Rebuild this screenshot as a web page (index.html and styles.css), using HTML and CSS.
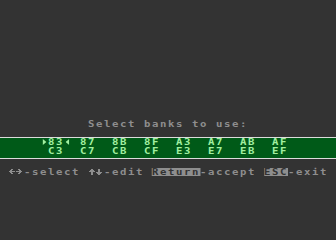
FILE: index.html
```
<!DOCTYPE html>
<html>
<head>
<meta charset="utf-8">
<link rel="stylesheet" href="styles.css">
</head>
<body>
<div class="screen">
  <div class="line title">Select banks to use:</div>
  <div class="band">
    <div class="line">    <span class="tri tri-r"></span>83<span class="tri tri-l"></span> 87  8B  8F  A3  A7  AB  AF</div>
    <div class="line">     C3  C7  CB  CF  E3  E7  EB  EF</div>
  </div>
  <div class="line help"><svg class="arr" viewBox="0 0 8 8" preserveAspectRatio="none"><path d="M3 1h2v1h-2zM2 2h2v1h-2zM1 3h6v1h-6zM2 4h2v1h-2zM3 5h2v1h-2z"/></svg><svg class="arr" viewBox="0 0 8 8" preserveAspectRatio="none"><path d="M3 1h2v1h-2zM4 2h2v1h-2zM1 3h6v1h-6zM4 4h2v1h-2zM3 5h2v1h-2z"/></svg>-select <svg class="arr" viewBox="0 0 8 8" preserveAspectRatio="none"><path d="M3 1h2v1h-2zM2 2h4v1h-4zM1 3h6v1h-6zM3 4h2v3h-2z"/></svg><svg class="arr" viewBox="0 0 8 8" preserveAspectRatio="none"><path d="M3 1h2v3h-2zM1 4h6v1h-6zM2 5h4v1h-4zM3 6h2v1h-2z"/></svg>-edit <span class="inv">Return</span>-accept <span class="inv">ESC</span>-exit</div>
</div>
</body>
</html>
```
FILE: styles.css
```
html, body {
  margin: 0;
  padding: 0;
  background: #333333;
}
.screen {
  width: 336px;
  height: 240px;
  display: flex;
  flex-direction: column;
  align-items: flex-start;
  padding-top: 120px;
  box-sizing: border-box;
}
.line {
  height: 8px;
  line-height: 8px;
  font-family: "DejaVu Sans Mono", monospace;
  font-weight: bold;
  font-size: 8.5px;
  letter-spacing: 1.283px;
  white-space: pre;
  margin-left: 8px;
  color: #8e8e8e;
  transform: scaleX(1.25);
  transform-origin: 0 0;
}
.title {
  margin-left: 88px;
}
.band {
  align-self: stretch;
  margin-top: 9px;
  border-top: 1px solid #dcdcdc;
  border-bottom: 1px solid #dcdcdc;
  background: #005a18;
  padding: 0 0 3px;
  display: flex;
  flex-direction: column;
  align-items: flex-start;
  gap: 1px;
}
.band .line {
  color: #a0f0a0;
}
.tri {
  display: inline-block;
  width: 6.4px;
  height: 8px;
  vertical-align: top;
  background: currentColor;
  letter-spacing: 0;
}
.tri-r {
  clip-path: polygon(35% 12.5%, 80% 50%, 35% 87.5%);
}
.tri-l {
  clip-path: polygon(65% 12.5%, 20% 50%, 65% 87.5%);
}
.arr {
  display: inline-block;
  width: 6.4px;
  height: 8px;
  vertical-align: top;
  fill: currentColor;
  shape-rendering: crispEdges;
}
.help {
  margin-top: 9px;
}
.inv {
  display: inline-block;
  height: 8px;
  line-height: 8px;
  vertical-align: top;
  background: #8e8e8e;
  color: #333333;
}
```
